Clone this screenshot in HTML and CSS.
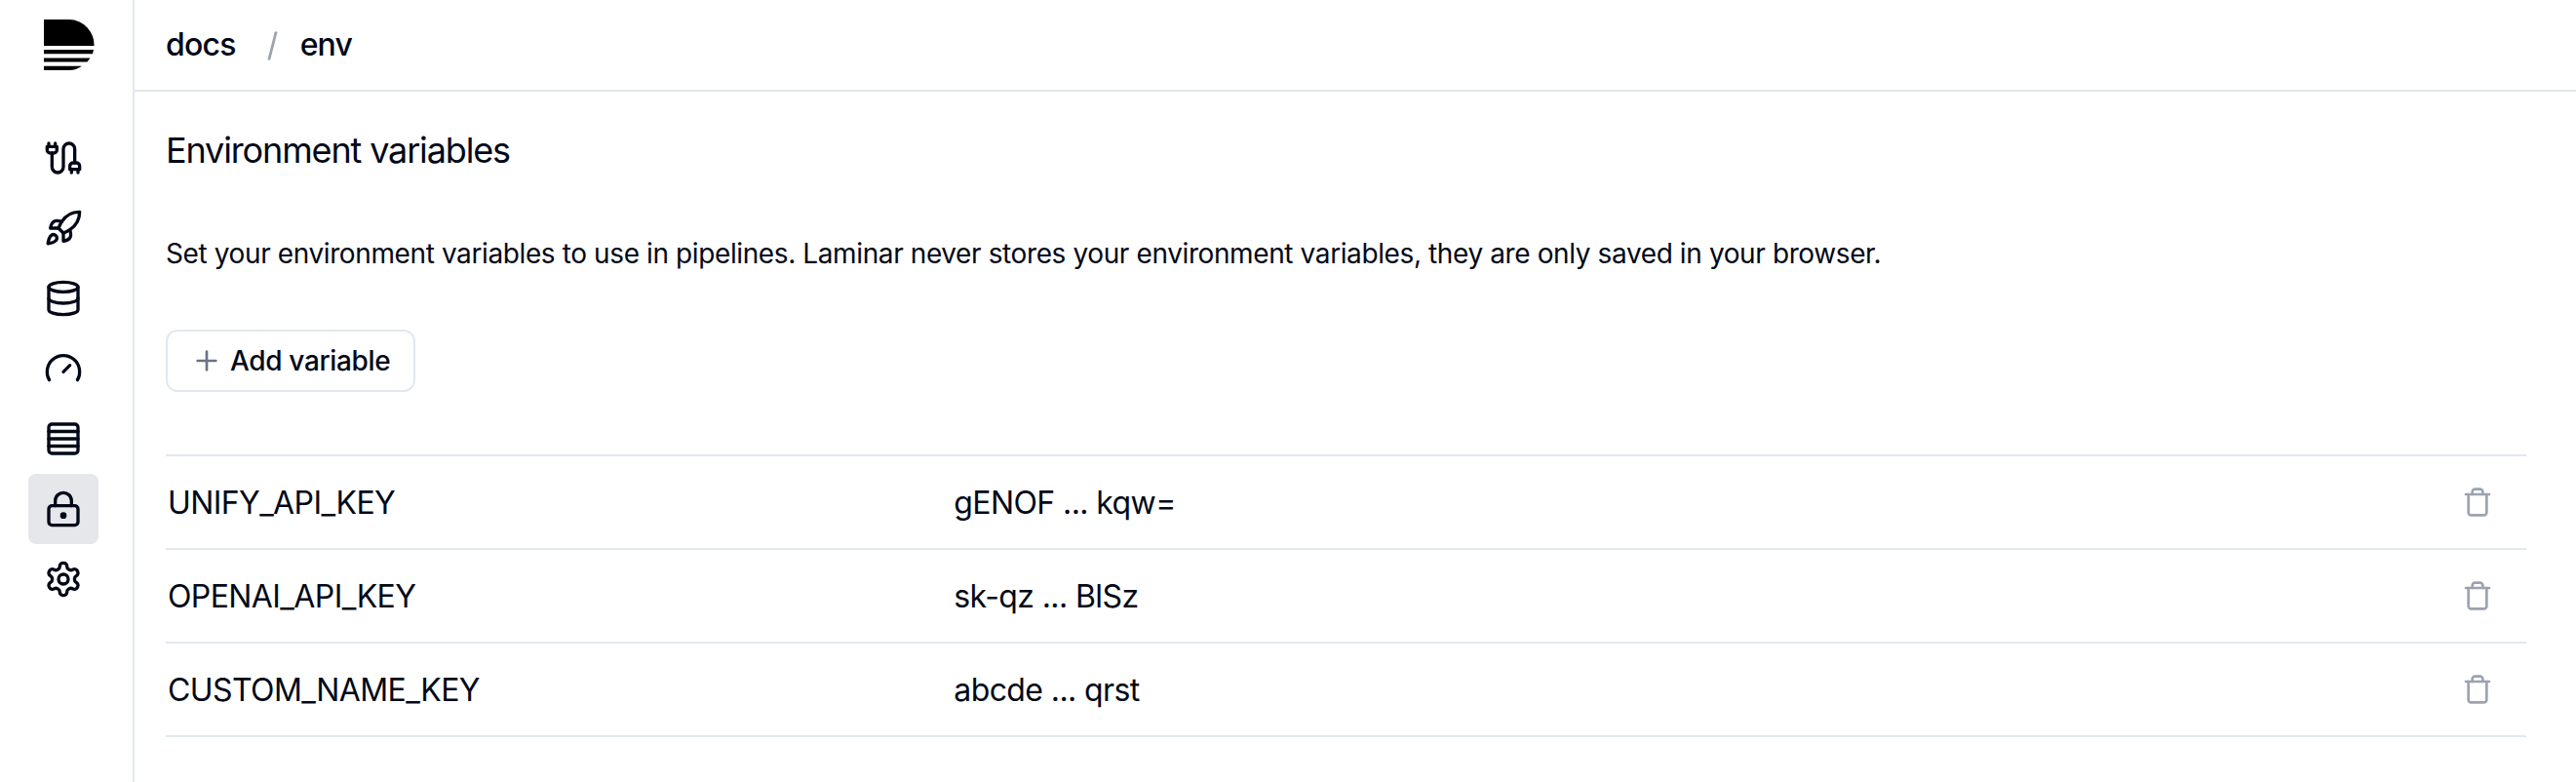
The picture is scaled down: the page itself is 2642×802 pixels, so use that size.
FILE: index.html
```html
<!DOCTYPE html>
<html lang="en">
<head>
<meta charset="utf-8">
<title>Environment variables</title>
<link rel="stylesheet" href="styles.css">
</head>
<body>
<svg class="sprite" width="0" height="0">
  <symbol id="trash" viewBox="0 0 24 24"><path d="M3 6h18"/><path d="M19 6v14c0 1-1 2-2 2H7c-1 0-2-1-2-2V6"/><path d="M8 6V4c0-1 1-2 2-2h4c1 0 2 1 2 2v2"/></symbol>
</svg>
<div class="app">
  <nav class="sidebar">
    <a class="logo"><svg viewBox="0 0 52 52"><path d="M0 0H26A26 26 0 0 1 51.5 27H0z"/><path d="M0 31H51L50 35.2H0z"/><path d="M0 39.5H47.5L44.5 43.5H0z"/><path d="M0 47.7H39C35 50.5 31 52 26 52H0z"/></svg></a>
    <a class="nav-item"><svg class="icon" viewBox="0 0 24 24"><path d="M4 9a2 2 0 0 1-2-2V5h6v2a2 2 0 0 1-2 2Z"/><path d="M3 5V3"/><path d="M7 5V3"/><path d="M19 15V6.5a3.5 3.5 0 0 0-7 0v11a3.5 3.5 0 0 1-7 0V9"/><path d="M17 21v-2"/><path d="M21 21v-2"/><path d="M22 19h-6v-2a2 2 0 0 1 2-2h2a2 2 0 0 1 2 2Z"/></svg></a>
    <a class="nav-item"><svg class="icon" viewBox="0 0 24 24"><path d="M4.5 16.5c-1.5 1.26-2 5-2 5s3.74-.5 5-2c.71-.84.7-2.13-.09-2.91a2.18 2.18 0 0 0-2.91-.09z"/><path d="m12 15-3-3a22 22 0 0 1 2-3.95A12.88 12.88 0 0 1 22 2c0 2.72-.78 7.5-6 11a22.35 22.35 0 0 1-4 2z"/><path d="M9 12H4s.55-3.03 2-4c1.62-1.08 5 0 5 0"/><path d="M12 15v5s3.03-.55 4-2c1.08-1.62 0-5 0-5"/></svg></a>
    <a class="nav-item"><svg class="icon" viewBox="0 0 24 24"><ellipse cx="12" cy="5" rx="9" ry="3"/><path d="M3 5V19A9 3 0 0 0 21 19V5"/><path d="M3 12A9 3 0 0 0 21 12"/></svg></a>
    <a class="nav-item"><svg class="icon" viewBox="0 0 24 24"><path d="m12 14 4-4"/><path d="M3.34 19a10 10 0 1 1 17.32 0"/></svg></a>
    <a class="nav-item"><svg class="icon" viewBox="0 0 24 24"><rect width="18" height="18" x="3" y="3" rx="2"/><path d="M21 7.5H3"/><path d="M21 12H3"/><path d="M21 16.5H3"/></svg></a>
    <a class="nav-item active"><svg class="icon" viewBox="0 0 24 24"><circle cx="12" cy="16" r="1"/><rect x="3" y="10" width="18" height="12" rx="2"/><path d="M7 10V7a5 5 0 0 1 10 0v3"/></svg></a>
    <a class="nav-item"><svg class="icon" viewBox="0 0 24 24"><path d="M12.22 2h-.44a2 2 0 0 0-2 2v.18a2 2 0 0 1-1 1.73l-.43.25a2 2 0 0 1-2 0l-.15-.08a2 2 0 0 0-2.73.73l-.22.38a2 2 0 0 0 .73 2.73l.15.1a2 2 0 0 1 1 1.72v.51a2 2 0 0 1-1 1.74l-.15.09a2 2 0 0 0-.73 2.73l.22.38a2 2 0 0 0 2.73.73l.15-.08a2 2 0 0 1 2 0l.43.25a2 2 0 0 1 1 1.73V20a2 2 0 0 0 2 2h.44a2 2 0 0 0 2-2v-.18a2 2 0 0 1 1-1.73l.43-.25a2 2 0 0 1 2 0l.15.08a2 2 0 0 0 2.73-.73l.22-.39a2 2 0 0 0-.73-2.73l-.15-.08a2 2 0 0 1-1-1.74v-.5a2 2 0 0 1 1-1.74l.15-.09a2 2 0 0 0 .73-2.73l-.22-.38a2 2 0 0 0-2.73-.73l-.15.08a2 2 0 0 1-2 0l-.43-.25a2 2 0 0 1-1-1.73V4a2 2 0 0 0-2-2z"/><circle cx="12" cy="12" r="3"/></svg></a>
  </nav>
  <main class="main">
    <header class="header">
      <span>docs</span>
      <svg class="slash" viewBox="0 0 12 30"><path d="M1.8 29.5 9.2 .5"/></svg>
      <span>env</span>
    </header>
    <section class="content">
      <h1 class="title">Environment variables</h1>
      <p class="description">Set your environment variables to use in pipelines. Laminar never stores your environment variables, they are only saved in your browser.</p>
      <button class="add"><svg class="icon plus" viewBox="0 0 24 24"><path d="M5 12h14"/><path d="M12 5v14"/></svg>Add variable</button>
      <div class="table">
        <div class="row"><span>UNIFY_API_KEY</span><span>gENOF ... kqw=</span><span class="action"><svg class="icon trash"><use href="#trash"/></svg></span></div>
        <div class="row"><span>OPENAI_API_KEY</span><span>sk-qz ... BlSz</span><span class="action"><svg class="icon trash"><use href="#trash"/></svg></span></div>
        <div class="row"><span>CUSTOM_NAME_KEY</span><span>abcde ... qrst</span><span class="action"><svg class="icon trash"><use href="#trash"/></svg></span></div>
      </div>
    </section>
  </main>
</div>
</body>
</html>
```
FILE: styles.css
```css
* { box-sizing: border-box; }
body {
  margin: 0;
  background: #fff;
  color: #020817;
  font-family: Inter, "Liberation Sans", sans-serif;
  font-size: 32px;
}
.sprite { display: block; }
.app { display: flex; height: 802px; overflow: hidden; }
.sidebar {
  width: 138px;
  flex: none;
  border-right: 2px solid #e2e8f0;
  padding: 20px 0 0 29px;
}
.logo { display: block; height: 106px; padding-left: 16px; }
.logo svg { display: block; width: 52px; height: 52px; fill: #000; }
.nav-item {
  display: flex;
  align-items: center;
  justify-content: center;
  width: 72px;
  height: 72px;
  border-radius: 8px;
}
.nav-item.active { background: #e5e7eb; }
.icon {
  display: block;
  width: 40px;
  height: 40px;
  fill: none;
  stroke: currentColor;
  stroke-width: 2;
  stroke-linecap: round;
  stroke-linejoin: round;
}
.main { flex: 1; min-width: 0; }
.header {
  display: flex;
  align-items: center;
  height: 94px;
  padding: 0 0 2px 32px;
  border-bottom: 2px solid #e2e8f0;
  font-weight: 500;
  letter-spacing: -0.8px;
}
.slash {
  width: 12px;
  height: 30px;
  margin: 4px 22px 0 32px;
  fill: none;
  stroke: #9ca3af;
  stroke-width: 2.8;
}
.content { padding: 38px 51px 0 32px; }
.title { margin: 0; font-size: 36px; font-weight: 400; line-height: 44px; letter-spacing: -1.14px; }
.description { margin: 64px 0 0; font-size: 28px; line-height: 40px; letter-spacing: -0.39px; }
.add {
  display: flex;
  align-items: center;
  gap: 8px;
  width: 256px;
  height: 64px;
  margin: 58px 0 0;
  padding: 0 24px;
  border: 2px solid #e2e8f0;
  border-radius: 12px;
  background: #fff;
  color: inherit;
  font: 500 28px/40px Inter, "Liberation Sans", sans-serif;
  letter-spacing: -0.35px;
  white-space: nowrap;
}
.plus { flex: none; width: 32px; height: 32px; stroke: #6b7280; }
.table { margin-top: 64px; border-top: 2px solid #e2e8f0; letter-spacing: -0.6px; }
.row {
  display: grid;
  grid-template-columns: repeat(3, 1fr);
  align-items: center;
  height: 96px;
  padding: 1px 0 0 2px;
  border-bottom: 2px solid #e2e8f0;
}
.action { display: flex; justify-content: flex-end; padding-right: 34px; }
.trash { width: 32px; height: 32px; margin-top: -2px; stroke: #9ca3af; }
```
